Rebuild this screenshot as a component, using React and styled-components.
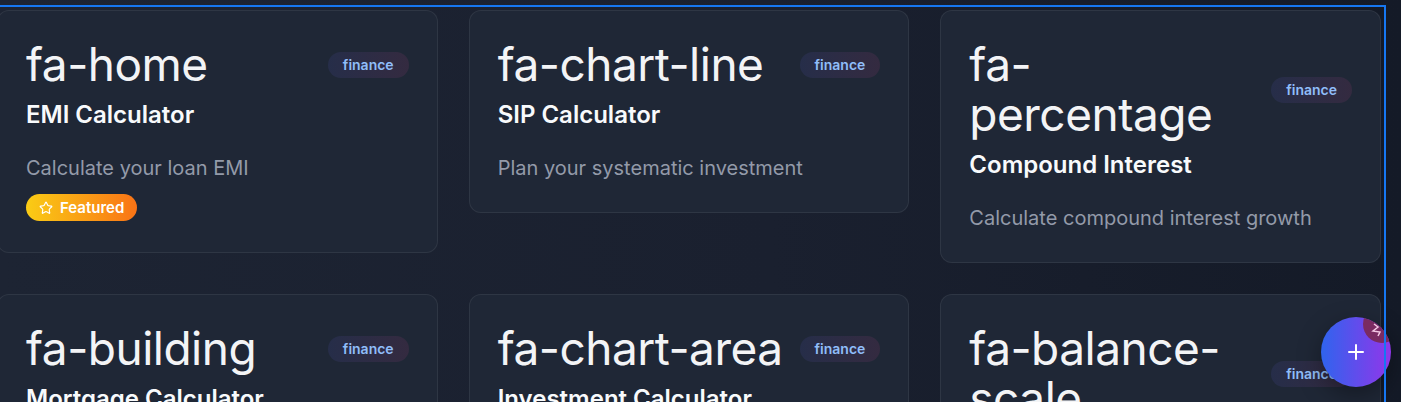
import React from "react";
import styled, { createGlobalStyle } from "styled-components";
import { Star, Plus } from "lucide-react";

const GlobalStyle = createGlobalStyle`
  html, body { margin: 0; padding: 0; }
  body {
    height: 402px;
    overflow: hidden;
    font-family: Inter, "Noto Sans", sans-serif;
    background: linear-gradient(90deg, #1d2433 0%, #1a202f 55%, #141a27 100%);
    color: #f1f5f9;
  }
`;

const Page = styled.div`
  position: relative;
  height: 402px;
  padding-top: 10px;
  box-sizing: border-box;
`;

const Grid = styled.div`
  display: grid;
  grid-template-columns: repeat(3, 1fr);
  gap: 31px;
  align-items: start;
  width: 1384px;
  margin-left: -3px;
`;

const Card = styled.div`
  background: #1f2736;
  border: 1px solid rgba(255, 255, 255, 0.07);
  border-radius: 12px;
  padding: 28px;
  min-width: 0;
`;

const Header = styled.div`
  display: flex;
  justify-content: space-between;
  align-items: center;
  gap: 8px;
  margin-bottom: 11px;
`;

const IconText = styled.div`
  font-size: 46px;
  line-height: 50px;
  letter-spacing: -0.5px;
  font-weight: 400;
  color: #f3f4f6;
  min-width: 0;
`;

const Category = styled.span`
  flex-shrink: 0;
  font-size: 14px;
  font-weight: 600;
  line-height: 18px;
  padding: 4px 15px;
  border-radius: 999px;
  color: #90bdf9;
  background: linear-gradient(90deg, rgba(99, 102, 241, 0.1), rgba(236, 72, 153, 0.1));
  margin-top: 2px;
`;

const Title = styled.h3`
  margin: 0 0 23px;
  font-size: 24px;
  font-weight: 600;
  line-height: 29px;
  color: #f8fafc;
`;

const Desc = styled.p`
  margin: 0;
  font-size: 20px;
  line-height: 1.6;
  color: #939aa9;
`;

const Featured = styled.span`
  display: inline-flex;
  align-items: center;
  gap: 7px;
  margin-top: 10px;
  margin-bottom: 3px;
  height: 27px;
  padding: 0 13px 0 13px;
  border-radius: 999px;
  background: linear-gradient(90deg, #facc15, #f97316);
  color: #ffffff;
  font-size: 15px;
  font-weight: 600;
`;

const Fab = styled.button`
  position: fixed;
  right: 10px;
  bottom: 15px;
  width: 70px;
  height: 70px;
  border-radius: 50%;
  border: none;
  padding: 0;
  overflow: hidden;
  display: flex;
  align-items: center;
  justify-content: center;
  color: #fff;
  background: linear-gradient(90deg, #2f64ee, #9136ea);
  box-shadow: 0 8px 24px rgba(0, 0, 0, 0.35);
  z-index: 5;
`;

const FabBadge = styled.span`
  position: absolute;
  top: -12px;
  right: -10px;
  width: 38px;
  height: 38px;
  border-radius: 50%;
  background: #7a2b62;
  display: flex;
  align-items: flex-end;
  justify-content: flex-start;
  padding: 0 0 6px 7px;
  box-sizing: border-box;
`;

const FocusRing = styled.div`
  position: absolute;
  top: 5px;
  left: -10px;
  right: 15px;
  bottom: -20px;
  border: 2px solid #1677f2;
  pointer-events: none;
  z-index: 10;
`;

const tools = [
  { icon: "fa-home", title: "EMI Calculator", desc: "Calculate your loan EMI", featured: true },
  { icon: "fa-chart-line", title: "SIP Calculator", desc: "Plan your systematic investment" },
  { icon: "fa-percentage", title: "Compound Interest", desc: "Calculate compound interest growth" },
  { icon: "fa-building", title: "Mortgage Calculator", desc: "Estimate your monthly mortgage" },
  { icon: "fa-chart-area", title: "Investment Calculator", desc: "Project your investment returns" },
  { icon: "fa-balance-scale", title: "Tax Calculator", desc: "Estimate your income tax" },
];

export default function App() {
  return (
    <>
      <GlobalStyle />
      <Page>
        <Grid>
          {tools.map((t) => (
            <Card key={t.icon}>
              <Header>
                <IconText>{t.icon}</IconText>
                <Category>finance</Category>
              </Header>
              <Title>{t.title}</Title>
              <Desc>{t.desc}</Desc>
              {t.featured && (
                <Featured>
                  <Star size={14} strokeWidth={2} />
                  Featured
                </Featured>
              )}
            </Card>
          ))}
        </Grid>
        <Fab aria-label="Add">
          <Plus size={24} strokeWidth={2} />
          <FabBadge>
            <svg width="14" height="14" viewBox="0 0 14 14" fill="none" stroke="#f3c6e4" strokeWidth="1.5" strokeLinejoin="miter">
              <polyline points="4,1 8,4 3,8 10,9 8,13" />
            </svg>
          </FabBadge>
        </Fab>
        <FocusRing />
      </Page>
    </>
  );
}
